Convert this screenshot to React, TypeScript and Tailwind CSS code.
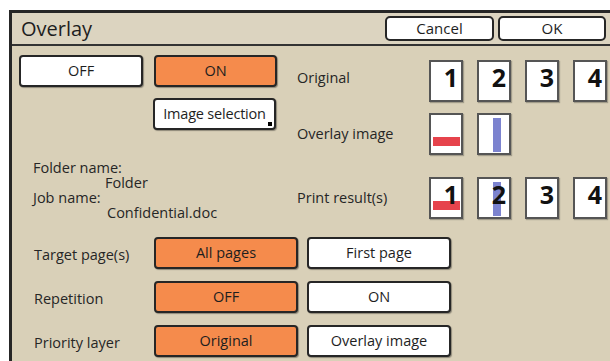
import React from 'react';

const font = { fontFamily: '"Open Sans", "Noto Sans", sans-serif' };

const Btn = ({ label, on, className = '' }: { label: string; on?: boolean; className?: string }) => (
    <div
        className={`flex items-center justify-center h-[32px] rounded-[4px] border-2 border-[#262626] shadow-[1px_1px_1px_rgba(0,0,0,0.35)] text-[14.5px] font-medium text-[#1e1e1e] ${on ? 'bg-[#f58b4c]' : 'bg-white'} ${className}`}
    >
        {label}
    </div>
);

const Page = ({ n, bar }: { n?: string; bar?: 'red' | 'blue' }) => (
    <div className="relative w-[34px] h-[42px] bg-white border-2 border-[#555555] shadow-[1px_1px_1px_rgba(0,0,0,0.25)] flex items-center justify-end pr-[3px] pb-[7px]">
        {bar === 'red' && <div className="absolute left-[2px] right-[1px] top-[22px] h-[9px] bg-[#e6434c]" />}
        {bar === 'blue' && <div className="absolute left-[14px] w-[8px] top-[3px] bottom-[1px] bg-[#7c83cf]" />}
        {n && <span className="relative text-[25px] font-bold leading-none text-[#111]">{n}</span>}
    </div>
);

const Row = ({ label, a, b }: { label: string; a: string; b: string }) => (
    <div className="flex items-center h-[32px]">
        <div className="w-[135px] pl-[15px] pt-[4px] text-[14.5px] font-medium text-[#262626]">{label}</div>
        <Btn label={a} on className="w-[144px]" />
        <Btn label={b} className="w-[144px] ml-[9px]" />
    </div>
);

export default function App() {
    return (
        <div className="w-[610px] h-[361px] bg-white overflow-hidden pt-[10px] pl-[9px]" style={font}>
            <div className="h-full border-t-[3px] border-l-[3px] border-[#262626] bg-[#d9d0b8] flex flex-col">
                {/* Title bar */}
                <div className="h-[33px] flex items-center justify-between pl-[9px] pr-[4px] bg-[#dcd4c0] border-b-2 border-[#333]">
                    <span className="text-[20px] font-medium text-[#1e1e1e]">Overlay</span>
                    <div className="flex gap-[4px]">
                        <div className="w-[109px] h-[25px] flex items-center justify-center bg-white border-2 border-[#262626] rounded-[5px] text-[15px] font-medium text-[#1e1e1e]">Cancel</div>
                        <div className="w-[108px] h-[25px] flex items-center justify-center bg-white border-2 border-[#262626] rounded-[5px] text-[15px] font-medium text-[#1e1e1e]">OK</div>
                    </div>
                </div>

                {/* Body */}
                <div className="px-[7px] pt-[9px]">
                    <div className="flex">
                        <div className="w-[258px]">
                            <div className="flex gap-[11px]">
                                <Btn label="OFF" className="w-[124px]" />
                                <Btn label="ON" on className="w-[123px]" />
                            </div>
                            <div className="relative mt-[11px] ml-[134px] w-[123px] h-[32px] flex items-center justify-center bg-white border-2 border-[#262626] rounded-[4px] shadow-[1px_1px_1px_rgba(0,0,0,0.35)] text-[14.5px] font-medium tracking-[-0.2px] text-[#1e1e1e]">
                                Image selection
                                <div className="absolute right-[2px] bottom-[2px] w-[4px] h-[4px] bg-black" />
                            </div>
                            <div className="mt-[30px] pl-[14px] text-[14.5px] font-medium leading-[15px] text-[#262626]">
                                <div>Folder name:</div>
                                <div className="pl-[72px]">Folder</div>
                                <div>Job name:</div>
                                <div className="pl-[74px]">Confidential.doc</div>
                            </div>
                        </div>

                        <div className="ml-[20px] pt-[5px] text-[14.5px] font-medium text-[#262626]">
                            <div className="flex items-center">
                                <div className="w-[132px] pb-[6px]">Original</div>
                                <div className="flex gap-[14px]">
                                    <Page n="1" />
                                    <Page n="2" />
                                    <Page n="3" />
                                    <Page n="4" />
                                </div>
                            </div>
                            <div className="flex items-center mt-[11px]">
                                <div className="w-[132px]">Overlay image</div>
                                <div className="flex gap-[14px]">
                                    <Page bar="red" />
                                    <Page bar="blue" />
                                </div>
                            </div>
                            <div className="flex items-center mt-[22px]">
                                <div className="w-[132px]">Print result(s)</div>
                                <div className="flex gap-[14px]">
                                    <Page n="1" bar="red" />
                                    <Page n="2" bar="blue" />
                                    <Page n="3" />
                                    <Page n="4" />
                                </div>
                            </div>
                        </div>
                    </div>

                    <div className="mt-[17px] flex flex-col gap-[12px]">
                        <Row label="Target page(s)" a="All pages" b="First page" />
                        <Row label="Repetition" a="OFF" b="ON" />
                        <Row label="Priority layer" a="Original" b="Overlay image" />
                    </div>
                </div>
            </div>
        </div>
    );
}
